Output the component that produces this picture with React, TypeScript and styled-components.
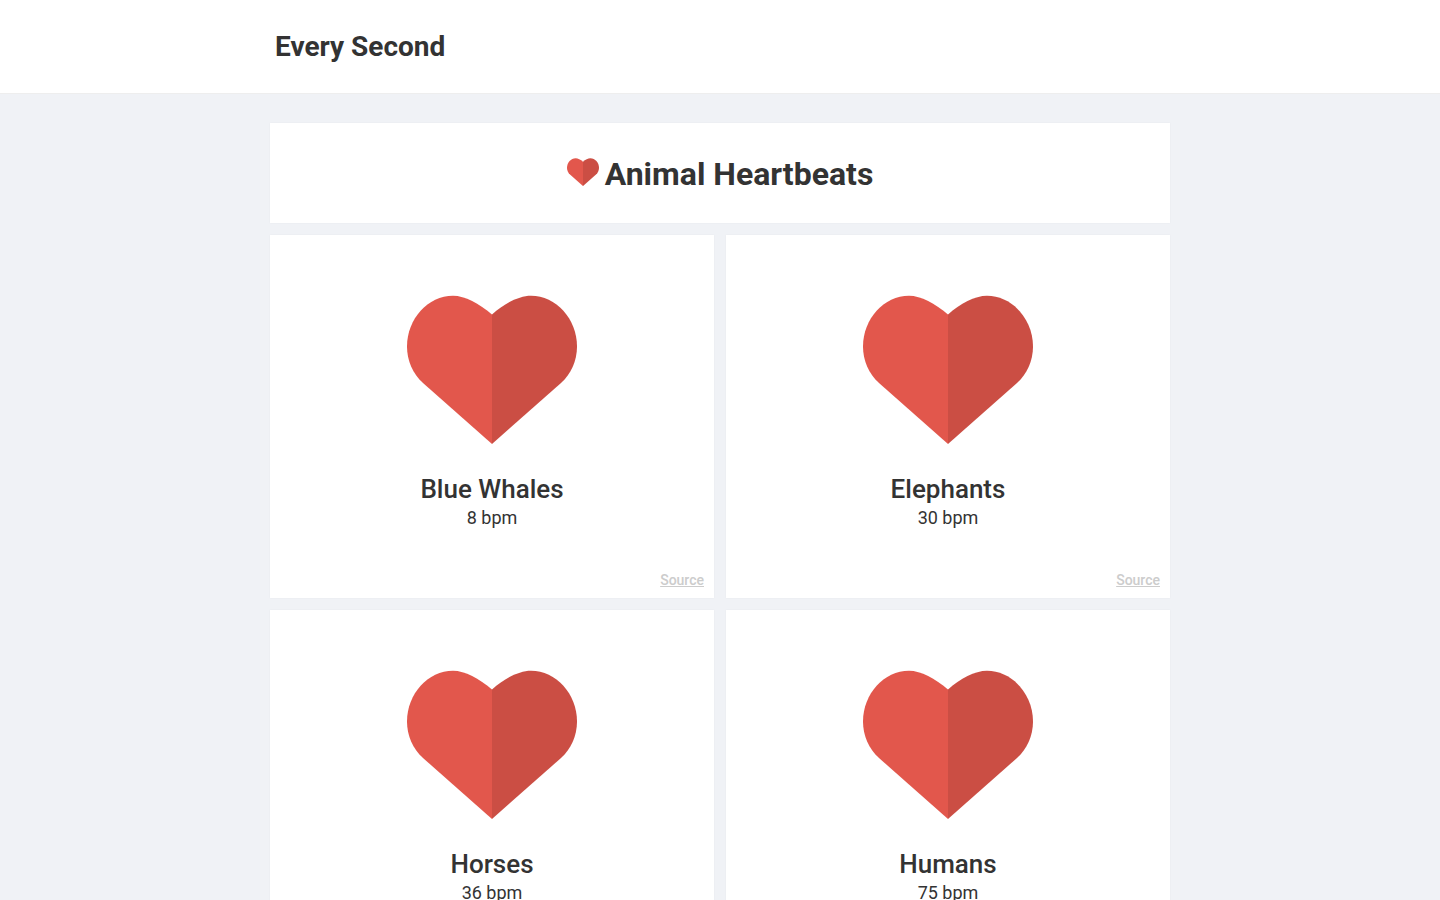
import React from "react";
import styled, { createGlobalStyle } from "styled-components";

const GlobalStyle = createGlobalStyle`
  *, *::before, *::after { box-sizing: border-box; }
  body {
    margin: 0;
    background: #f0f2f6;
    color: #333;
    font-family: Roboto, "Liberation Sans", sans-serif;
    font-size: 18px;
    line-height: 24px;
  }
`;

const Header = styled.header`
  background: #fff;
  border-bottom: 1px solid #eee;
`;

const HeaderInner = styled.div`
  max-width: 900px;
  margin: 0 auto;
  padding: 29px 5px 28px;
`;

const SiteTitle = styled.h1`
  margin: 0;
  font-size: 28px;
  line-height: 36px;
  font-weight: 700;
`;

const Main = styled.main`
  max-width: 900px;
  margin: 0 auto;
  padding: 29px 0;
  display: grid;
  gap: 12px;
`;

const Panel = styled.section`
  background: #fff;
  box-shadow: 0 0 2px rgba(0, 0, 0, 0.04);
`;

const TitlePanel = styled(Panel)`
  display: flex;
  justify-content: center;
  align-items: center;
  padding: 31px 20px 29px;
`;

const PageTitle = styled.h2`
  display: flex;
  align-items: center;
  gap: 6px;
  margin: 0;
  font-size: 32px;
  line-height: 40px;
  font-weight: 700;
`;

const CardGrid = styled.div`
  display: grid;
  grid-template-columns: repeat(2, minmax(0, 1fr));
  gap: 12px;
`;

const Card = styled(Panel)`
  display: flex;
  flex-direction: column;
  align-items: center;
  padding: 60px 10px 8px;
`;

const HeartSvg = styled.svg<{ $width: number; $space: number }>`
  display: block;
  width: ${(p) => p.$width}px;
  height: auto;
  margin-bottom: ${(p) => p.$space}px;
`;

const AnimalName = styled.h3`
  margin: 0;
  font-size: 26px;
  line-height: 32px;
  font-weight: 500;
`;

const Rate = styled.p`
  margin: 1px 0 40px;
`;

const SourceLink = styled.a`
  align-self: flex-end;
  color: #ccc;
  font-size: 14px;
  line-height: 20px;
  font-weight: 500;
  text-decoration: underline;
`;

function Heart({ width, space }: { width: number; space: number }) {
  return (
    <HeartSvg $width={width} $space={space} viewBox="0 0 170 149" aria-hidden="true">
      <path fill="#e2574c" d="M85 19.500C72 8.500 58 .8 46 .8C21 .8 0 24 0 51.500C0 66 6 79 16 88L85 149Z" />
      <path fill="#cb4e44" d="M85 19.500C97 8.500 112 .8 124 .8C149 .8 170 24 170 51.500C170 66 164 79 154 88L85 149Z" />
    </HeartSvg>
  );
}

const animals = [
  { name: "Blue Whales", bpm: 8 },
  { name: "Elephants", bpm: 30 },
  { name: "Horses", bpm: 36 },
  { name: "Humans", bpm: 75 },
];

export default function App() {
  return (
    <>
      <GlobalStyle />
      <Header>
        <HeaderInner>
          <SiteTitle>Every Second</SiteTitle>
        </HeaderInner>
      </Header>
      <Main>
        <TitlePanel>
          <PageTitle>
            <Heart width={32} space={4} />
            Animal Heartbeats
          </PageTitle>
        </TitlePanel>
        <CardGrid>
          {animals.map((animal) => (
            <Card key={animal.name}>
              <Heart width={170} space={29} />
              <AnimalName>{animal.name}</AnimalName>
              <Rate>{animal.bpm} bpm</Rate>
              <SourceLink href="#">Source</SourceLink>
            </Card>
          ))}
        </CardGrid>
      </Main>
    </>
  );
}
